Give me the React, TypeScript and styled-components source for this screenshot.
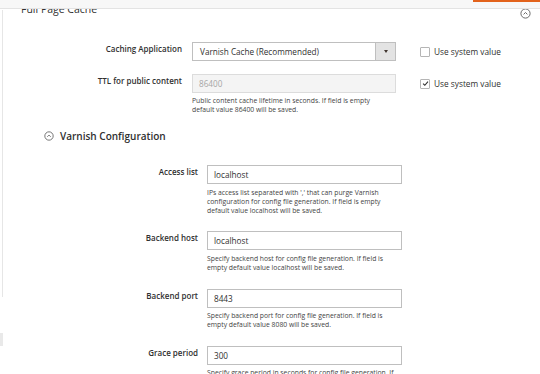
import styled, {createGlobalStyle} from "styled-components";

const GlobalStyle = createGlobalStyle`
    html, body {
        margin: 0;
        padding: 0;
        background: #ffffff;
        font-family: "Open Sans", "Noto Sans", sans-serif;
        color: #303030;
    }
`;

const TopBand = styled.div`
    position: fixed;
    top: 0;
    left: 0;
    right: 0;
    height: 8px;
    background-color: #f7f7f7;
    border-bottom: 1px solid #e3e3e3;
    z-index: 2;
`;

const OrangeTab = styled.div`
    position: fixed;
    top: 0;
    right: 0;
    width: 67px;
    height: 2px;
    background-color: #e2621b;
    z-index: 3;
`;

const Layout = styled.div`
    display: flex;
    width: 540px;
    min-height: 374px;
`;

const Rail = styled.div`
    width: 3px;
    display: flex;
    flex-direction: column;
    flex-shrink: 0;
`;

const RailLine = styled.div`
    margin-top: 10px;
    height: 287px;
    width: 2px;
    border-right: 1px solid #e6e6e6;
`;

const RailNub = styled.div`
    margin-top: 36px;
    height: 13px;
    width: 3px;
    background-color: #e9e9e9;
`;

const Main = styled.div`
    flex: 1;
    display: flex;
    flex-direction: column;
`;

const SectionHead = styled.div`
    height: 20px;
    display: flex;
    justify-content: space-between;
    align-items: flex-start;
    padding: 0 9px 0 18px;
`;

const SectionTitle = styled.div`
    padding-top: 4px;
    font-size: 10.5px;
    line-height: 11px;
    color: #303030;
`;

const IconBox = styled.div`
    margin-top: 8px;
    width: 11px;
    height: 11px;
    display: flex;

    svg {
        display: block;
    }
`;

const FieldList = styled.div<{ $top: number }>`
    margin-top: ${p => p.$top}px;
    display: flex;
    flex-direction: column;
`;

const FieldRow = styled.div<{ $labelWidth: number; $controlWidth: number; $gap: number }>`
    display: grid;
    grid-template-columns: ${p => p.$labelWidth}px ${p => p.$controlWidth}px auto;
    column-gap: ${p => p.$gap}px;
    margin-bottom: 16px;

    &.plain {
        margin-bottom: 13px;
    }
`;

const Label = styled.div`
    text-align: right;
    padding-top: 1px;
    font-size: 8px;
    line-height: 11px;
    font-weight: 600;
    color: #303030;
    white-space: nowrap;
`;

const Control = styled.div`
    display: flex;
    flex-direction: column;
`;

const Input = styled.div<{ $disabled?: boolean }>`
    box-sizing: border-box;
    height: 19px;
    border: 1px solid ${p => (p.$disabled ? "#dcdcdc" : "#bfbfbf")};
    background-color: ${p => (p.$disabled ? "#f4f4f4" : "#ffffff")};
    color: ${p => (p.$disabled ? "#a6a6a6" : "#303030")};
    font-size: 8.2px;
    line-height: 17px;
    padding-left: 6px;
    white-space: nowrap;
    overflow: hidden;
`;

const Select = styled.div`
    box-sizing: border-box;
    height: 19px;
    border: 1px solid #bfbfbf;
    display: flex;
    font-size: 8.2px;
    line-height: 17px;
`;

const SelectText = styled.div`
    flex: 1;
    padding-left: 7px;
    white-space: nowrap;
`;

const SelectArrow = styled.div`
    width: 19px;
    background-color: #e3e3e3;
    border-left: 1px solid #bfbfbf;
    display: flex;
    align-items: center;
    justify-content: center;

    &::after {
        content: "";
        border-left: 2px solid transparent;
        border-right: 2px solid transparent;
        border-top: 3px solid #41362f;
    }
`;

const Help = styled.div<{ $top?: number }>`
    margin-top: ${p => p.$top ?? 3.5}px;
    font-size: 6.8px;
    line-height: 9.3px;
    color: #444444;
`;

const Aside = styled.label`
    margin-left: 14px;
    height: 19px;
    display: flex;
    align-items: center;
    gap: 4px;
    font-size: 8.3px;
    color: #303030;
    white-space: nowrap;
`;

const Check = styled.span`
    box-sizing: border-box;
    width: 10px;
    height: 10px;
    border: 1px solid #b5b5b5;
    border-radius: 1px;
    background: #ffffff;
    display: flex;
    align-items: center;
    justify-content: center;
`;

const SubHead = styled.div`
    padding-left: 41px;
    display: flex;
    align-items: center;
    gap: 6px;
    height: 12px;
    font-size: 10px;
    font-weight: 600;
    color: #303030;
`;

const CircleChevron = ({size}: { size: number }) => (
    <svg width={size} height={size} viewBox="0 0 11 11">
        <circle cx="5.5" cy="5.5" r="4.6" fill="none" stroke="#5a5a5a" strokeWidth="0.9"/>
        <path d="M3.6 6.4 L5.5 4.5 L7.4 6.4" fill="none" stroke="#5a5a5a" strokeWidth="0.9"/>
    </svg>
);

const Tick = () => (
    <svg width="7" height="7" viewBox="0 0 8 8">
        <path d="M1.2 4.2 L3.2 6 L6.8 1.8" fill="none" stroke="#303030" strokeWidth="1.2"/>
    </svg>
);

const varnishFields = [
    {
        label: "Access list",
        value: "localhost",
        help: [
            "IPs access list separated with ',' that can purge Varnish",
            "configuration for config file generation. If field is empty",
            "default value localhost will be saved.",
        ],
    },
    {
        label: "Backend host",
        value: "localhost",
        help: [
            "Specify backend host for config file generation. If field is",
            "empty default value localhost will be saved.",
        ],
    },
    {
        label: "Backend port",
        value: "8443",
        help: [
            "Specify backend port for config file generation. If field is",
            "empty default value 8080 will be saved.",
        ],
    },
    {
        label: "Grace period",
        value: "300",
        help: ["Specify grace period in seconds for config file generation. If"],
    },
];

export default function App() {
    return (
        <>
            <GlobalStyle/>
            <TopBand/>
            <OrangeTab/>
            <Layout>
                <Rail>
                    <RailLine/>
                    <RailNub/>
                </Rail>
                <Main>
                    <SectionHead>
                        <SectionTitle>Full Page Cache</SectionTitle>
                        <IconBox>
                            <CircleChevron size={11}/>
                        </IconBox>
                    </SectionHead>

                    <FieldList $top={22}>
                        <FieldRow className="plain" $labelWidth={179} $controlWidth={204} $gap={10}>
                            <Label>Caching Application</Label>
                            <Control>
                                <Select>
                                    <SelectText>Varnish Cache (Recommended)</SelectText>
                                    <SelectArrow/>
                                </Select>
                            </Control>
                            <Aside>
                                <Check/>
                                Use system value
                            </Aside>
                        </FieldRow>
                        <FieldRow $labelWidth={179} $controlWidth={204} $gap={10}>
                            <Label>TTL for public content</Label>
                            <Control>
                                <Input $disabled>86400</Input>
                                <Help $top={2.5}>
                                    Public content cache lifetime in seconds. If field is empty<br/>
                                    default value 86400 will be saved.
                                </Help>
                            </Control>
                            <Aside>
                                <Check><Tick/></Check>
                                Use system value
                            </Aside>
                        </FieldRow>
                    </FieldList>

                    <SubHead>
                        <CircleChevron size={10}/>
                        Varnish Configuration
                    </SubHead>

                    <FieldList $top={23}>
                        {varnishFields.map(f => (
                            <FieldRow key={f.label} $labelWidth={195} $controlWidth={195} $gap={9}>
                                <Label>{f.label}</Label>
                                <Control>
                                    <Input>{f.value}</Input>
                                    <Help>
                                        {f.help.map((line, i) => (
                                            <div key={i}>{line}</div>
                                        ))}
                                    </Help>
                                </Control>
                            </FieldRow>
                        ))}
                    </FieldList>
                </Main>
            </Layout>
        </>
    );
}
